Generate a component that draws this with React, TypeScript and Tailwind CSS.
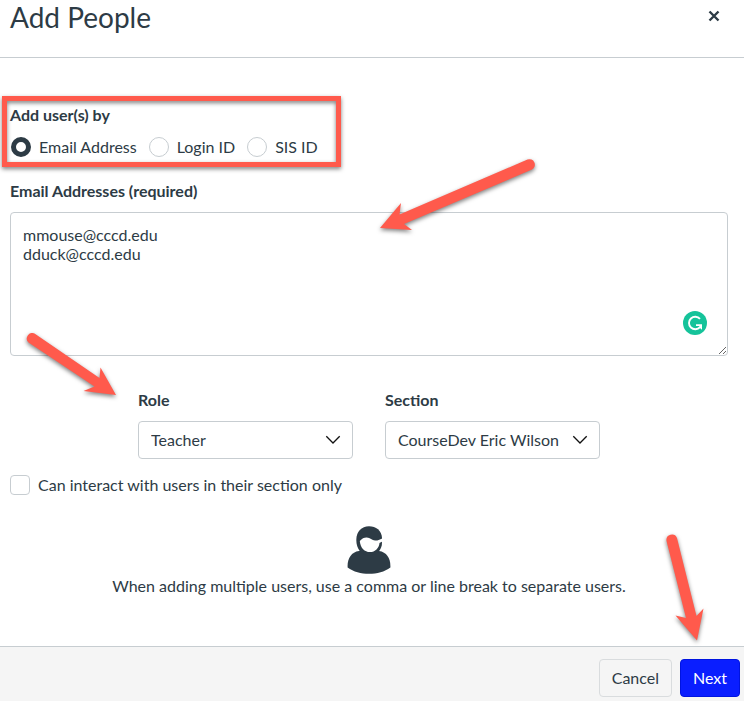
import { useState } from 'react'
import type { ReactNode } from 'react'

const LOOKUPS = [
  { id: 'email', label: 'Email Address' },
  { id: 'login', label: 'Login ID' },
  { id: 'sis', label: 'SIS ID' },
]

const SHADOW = 'drop-shadow-[0_2px_2px_rgba(0,0,0,0.5)]'

type SelectFieldProps = {
  id: string
  label: string
  children: ReactNode
}

function SelectField({ id, label, children }: SelectFieldProps) {
  return (
    <div className="w-[215px]">
      <label htmlFor={id} className="block font-bold leading-6">
        {label}
      </label>
      <div className="relative mt-[9px]">
        <select
          id={id}
          className="block h-[38px] w-full appearance-none rounded border border-[#c7cdd1] bg-white pl-3 pr-8"
        >
          {children}
        </select>
        <svg
          viewBox="0 0 16 16"
          className="pointer-events-none absolute right-3 top-[11px] size-4"
          fill="none"
          stroke="#111"
          strokeWidth="1.3"
        >
          <path d="M1.3 4.2 8 11l6.7-6.8" />
        </svg>
      </div>
    </div>
  )
}

function UserIcon() {
  return (
    <svg viewBox="0 0 44 48" className="h-12 w-11" fill="#2d3b45">
      <path d="M.6 40C.6 32 4.500 26 12 25l10-.5 10 .5c7.500 1 11.400 7 11.400 15v1.500C37.500 45.800 30 47.800 22 47.800S6.500 45.800.6 41.500Z" />
      <path d="M9.300 14C9.300 5.500 14.500.2 22 .2c7 0 12.600 4.300 13 11.500v5C35 24 29.500 29.500 22 29.500S9.300 23 9.300 14Z" />
      <path
        fill="#fff"
        d="M12.800 15c2.200-2.400 4.400-3.500 7-3.400 3.400.2 5.200 2.700 8.200 2.900 3 .1 5.300-1.100 8-2.600v3.600c-1.600.3-2.400 1-3.500 1.400-.3 4.800-4.500 9.200-9.500 9.200-5.300 0-9.600-4-10.200-11.100Z"
      />
    </svg>
  )
}

export default function App() {
  const [lookup, setLookup] = useState('email')

  return (
    <div className="min-h-screen bg-white font-['Lato',sans-serif] text-base text-[#2d3b45]">
      <header className="flex h-[58px] items-start justify-between border-b border-[#c7cdd1] pl-[10px] pr-6">
        <h2 className="text-[28px] leading-[34px]">Add People</h2>
        <button type="button" aria-label="Close" className="mt-[10px] flex size-3 items-center justify-center">
          <svg viewBox="0 0 12 12" className="size-3" stroke="#2d3b45" strokeWidth="2.4">
            <path d="M1.500 1.500 10.500 10.500M10.500 1.500 1.500 10.500" />
          </svg>
        </button>
      </header>

      <main className="pb-12 pl-[10px] pr-4 pt-[45px]">
        <div className="relative">
          <fieldset>
            <legend className="font-bold leading-6">Add user(s) by</legend>
            <div className="mt-2 flex gap-3 pl-px">
              {LOOKUPS.map((l) => (
                <label key={l.id} className="flex items-center gap-2 leading-6">
                  <input
                    type="radio"
                    name="lookup"
                    checked={lookup === l.id}
                    onChange={() => setLookup(l.id)}
                    className="size-5 appearance-none rounded-full border border-[#c7cdd1] bg-white checked:border-[5px] checked:border-[#2d3b45]"
                  />
                  {l.label}
                </label>
              ))}
            </div>
          </fieldset>
          <div
            className={`pointer-events-none absolute -left-2 -top-[7px] h-[71px] w-[339px] border-[5px] border-[#ff5a4c] ${SHADOW}`}
          />
        </div>

        <div className="relative mt-5">
          <label htmlFor="emails" className="block font-bold leading-6">
            Email Addresses (required)
          </label>
          <textarea
            id="emails"
            defaultValue={'mmouse@cccd.edu\ndduck@cccd.edu'}
            spellCheck={false}
            className="mt-[9px] block h-36 w-full rounded border border-[#c7cdd1] p-3 leading-[19px]"
          />
          <svg viewBox="0 0 24 24" className="absolute bottom-[21px] right-[21px] size-6">
            <circle cx="12" cy="12" r="12" fill="#15c39a" />
            <path
              d="M17 7.800A6.300 6.300 0 1 0 17 16.200L17.800 14"
              fill="none"
              stroke="#fff"
              strokeWidth="1.900"
            />
            <path d="M13 13.200h6v5.600l-2.100-1.700.3-2.200H13Z" fill="#fff" />
          </svg>
          <svg
            viewBox="0 0 160 80"
            className={`pointer-events-none absolute -top-6 left-[368px] h-20 w-40 ${SHADOW}`}
            fill="#ff5a4c"
          >
            <path d="M2 73 23 48 21.500 59.500 149.500 4.500A5.500 5.500 0 0 1 154 14.500L26 69 34 75Z" />
          </svg>
        </div>

        <div className="relative mt-8 flex justify-center gap-8">
          <SelectField id="role" label="Role">
            <option>Teacher</option>
          </SelectField>
          <SelectField id="section" label="Section">
            <option>CourseDev Eric Wilson</option>
          </SelectField>
          <svg
            viewBox="0 0 96 72"
            className={`pointer-events-none absolute left-4 -top-[58px] h-[72px] w-24 ${SHADOW}`}
            fill="#ff5a4c"
          >
            <path d="M90 65 57.500 61 68.500 56.500 2.500 12.500A5.500 5.500 0 0 1 8.500 3.500L73.500 48 74.500 37.500Z" />
          </svg>
        </div>

        <label className="mt-[14px] flex items-center gap-2 leading-6">
          <input
            type="checkbox"
            className="size-5 appearance-none rounded border border-[#c7cdd1] bg-white checked:bg-[#2d3b45]"
          />
          Can interact with users in their section only
        </label>

        <div className="mt-[29px] flex flex-col items-center">
          <UserIcon />
          <p className="leading-6">When adding multiple users, use a comma or line break to separate users.</p>
        </div>
      </main>

      <footer className="relative flex justify-end gap-2 border-t border-[#c7cdd1] bg-[#f5f5f5] pb-1 pl-4 pr-1 pt-3">
        <button type="button" className="h-[38px] rounded-sm border border-[#d9dcde] bg-[#f5f5f5] px-3">
          Cancel
        </button>
        <button type="button" className="h-[38px] rounded-sm border border-[#0014e0] bg-[#0a1eff] px-3 text-white">
          Next
        </button>
        <svg
          viewBox="0 0 48 112"
          className={`pointer-events-none absolute -top-[114px] right-8 h-28 w-12 ${SHADOW}`}
          fill="#ff5a4c"
        >
          <path d="M33 107.500 11.500 82.500 22 85 2.500 8A5.500 5.500 0 0 1 13 5L32.500 83 39.500 75.500Z" />
        </svg>
      </footer>
    </div>
  )
}
